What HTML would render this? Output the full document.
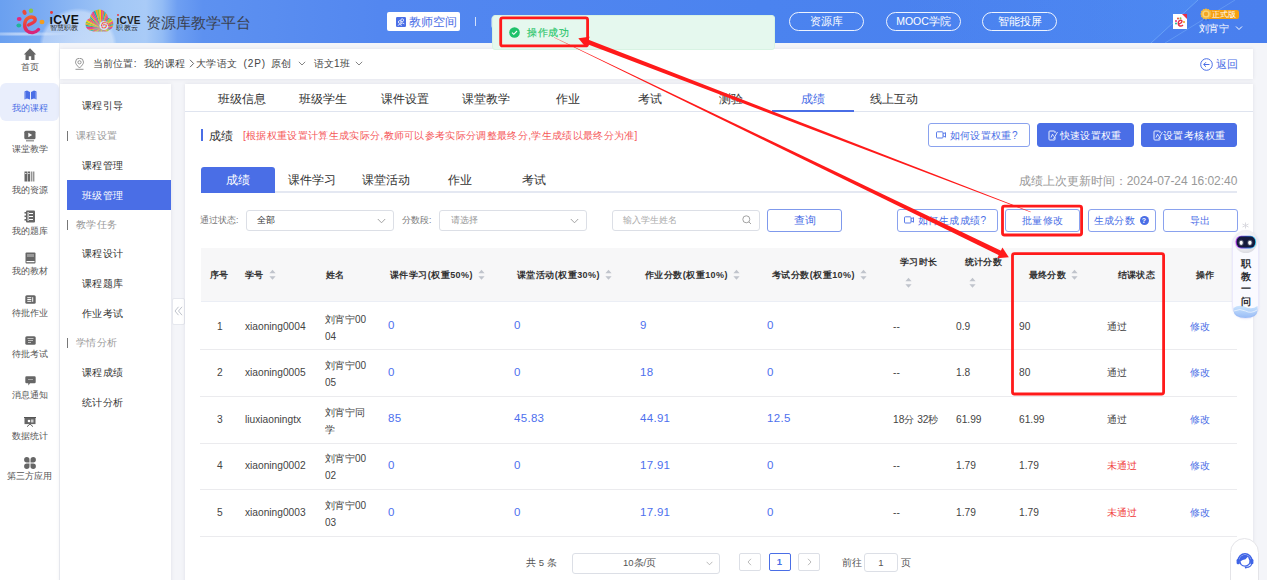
<!DOCTYPE html>
<html><head><meta charset="utf-8">
<style>
*{box-sizing:border-box;margin:0;padding:0}
html,body{width:1267px;height:580px;overflow:hidden}
body{position:relative;background:#f4f5f9;font-family:"Liberation Sans",sans-serif;color:#333;}
.a{position:absolute;white-space:nowrap}
#hdr{left:0;top:0;width:1267px;height:43px;overflow:hidden;
background:
radial-gradient(circle at 78px 47px,rgba(255,255,255,.45) 0,rgba(255,255,255,.38) 35px,rgba(255,255,255,0) 39px),
radial-gradient(ellipse 50px 2.5px at 20px 34px,rgba(255,255,255,.6),rgba(255,255,255,0) 100%),
linear-gradient(90deg,#6aa0f0 0%,#79aaf2 3%,#8db8f4 6%,#a2c7f6 9%,#a9cbf7 11.5%,#93bcf5 12.8%,#6e9ff2 14%,#5d91f0 16%,#5387f0 30%,#4b83ef 60%,#497fee 100%)}
#nav{left:0;top:43px;width:60px;height:537px;background:#fff;border-right:1px solid #eef0f4}
.ni{position:absolute;left:0;width:59px;text-align:center;font-size:8.7px;color:#555;line-height:10px}
.ni svg{display:block;margin:0 auto}
#crumb{left:60px;top:49px;width:1192.5px;height:30px;background:#fff;box-shadow:0 0 4px rgba(0,20,60,.09)}
#menu{left:60px;top:84px;width:111px;height:520px;background:#fff;box-shadow:0 0 4px rgba(0,20,60,.09)}
.mi{position:absolute;left:22px;font-size:10px;letter-spacing:.4px;color:#333;line-height:12px}
.mg{position:absolute;left:16px;font-size:10px;letter-spacing:.4px;color:#999;line-height:12px}
.mg:before{content:"";position:absolute;left:-9.5px;top:1px;width:1.3px;height:10px;background:#777}
#main{left:185px;top:83.5px;width:1067.5px;height:520px;background:#fff;box-shadow:0 0 4px rgba(0,20,60,.09)}
.pill{position:absolute;top:12px;height:19px;border:1px solid rgba(255,255,255,.9);border-radius:10px;color:#fff;font-size:10.5px;line-height:17px;text-align:center}
.tab{position:absolute;top:92.8px;width:81.6px;text-align:center;font-size:12px;line-height:13px;color:#333}
.stab{position:absolute;top:174px;width:74px;text-align:center;font-size:12px;line-height:13px;color:#333}
.btn{position:absolute;height:24px;border:1px solid #8aa2ee;border-radius:3px;background:#fff;color:#4a6ee6;font-size:10.5px;line-height:22px;text-align:center}
.bt{font-size:10px;letter-spacing:.4px;line-height:12px}
.bb{background:#4a6ee6;border-color:#4a6ee6;color:#fff}
.th{position:absolute;font-size:9px;letter-spacing:.45px;font-weight:bold;color:#333;line-height:11px}
.td{position:absolute;font-size:10.2px;color:#444;line-height:12px}
.bl{color:#4a6ee6}
.bn{font-size:11.5px;letter-spacing:.3px;color:#4d70ee}
.rd{color:#f03c3c}
.sort{display:inline-block;width:7px;height:11px;vertical-align:middle;margin-left:5px;position:relative;top:-0.5px}
.hl{position:absolute;left:200px;width:1037px;height:1px;background:#ebebee}
</style></head>
<body>
<!-- HEADER -->
<div id="hdr" class="a">
  <!-- flower logo -->
  <svg class="a" style="left:14px;top:8px" width="32" height="28" viewBox="0 0 32 28">
    <defs><linearGradient id="eg" x1="0" y1="0" x2="0.3" y2="1"><stop offset="0" stop-color="#f2652b"/><stop offset=".55" stop-color="#e8334a"/><stop offset="1" stop-color="#d8247a"/></linearGradient></defs>
    <ellipse cx="10.5" cy="4.3" rx="2" ry="2.6" fill="#ec4a3a" transform="rotate(-25 10.5 4.3)"/>
    <ellipse cx="17" cy="2.8" rx="2.2" ry="2.2" fill="#8dc641"/>
    <ellipse cx="5.2" cy="11" rx="2.4" ry="2" fill="#e3287c"/>
    <ellipse cx="4.8" cy="17.5" rx="2.4" ry="2" fill="#20b49b"/>
    <ellipse cx="28" cy="14" rx="2.5" ry="2.3" fill="#f49d1c"/>
    <path d="M14.5 17 C16.5 15.5 21 15 21.2 12 C21.3 9 17 8.2 13.8 10.2 C10 12.8 9.6 19.5 13 22.8 C16.3 25.8 21.5 25 24.5 21.5" fill="none" stroke="url(#eg)" stroke-width="3.4" stroke-linecap="round"/>
  </svg>
  <div class="a" style="left:49.5px;top:13.5px;font-size:12.2px;font-weight:bold;color:#111;line-height:12px;letter-spacing:.3px">&#305;CVE</div>
  <div class="a" style="left:50.3px;top:11.2px;width:2.8px;height:2.8px;border-radius:50%;background:#e8393a"></div>
  <div class="a" style="left:50px;top:24px;font-size:6.5px;color:#222;line-height:7px">智慧职教</div>
  <!-- cloud logo -->
  <svg class="a" style="left:85px;top:9px" width="30" height="24" viewBox="0 0 30 24">
    <defs><clipPath id="cl"><circle cx="7" cy="15.5" r="6.5"/><circle cx="14" cy="9.5" r="9"/><circle cx="22" cy="15" r="6.3"/><rect x="5" y="14" width="20" height="8.5" rx="4"/></clipPath></defs>
    <g clip-path="url(#cl)"><path d="M16 19 L46.0 19.0 L45.8 22.1 Z" fill="#ef3f7a"/><path d="M16 19 L45.8 22.1 L45.3 25.2 Z" fill="#1fb3a0"/><path d="M16 19 L45.3 25.2 L44.5 28.3 Z" fill="#f7a21b"/><path d="M16 19 L44.5 28.3 L43.4 31.2 Z" fill="#8cc63f"/><path d="M16 19 L43.4 31.2 L42.0 34.0 Z" fill="#f5d20a"/><path d="M16 19 L42.0 34.0 L40.3 36.6 Z" fill="#e84c8b"/><path d="M16 19 L40.3 36.6 L38.3 39.1 Z" fill="#f26b3a"/><path d="M16 19 L38.3 39.1 L36.1 41.3 Z" fill="#2bb6a6"/><path d="M16 19 L36.1 41.3 L33.6 43.3 Z" fill="#f39a1a"/><path d="M16 19 L33.6 43.3 L31.0 45.0 Z" fill="#d94ea0"/><path d="M16 19 L31.0 45.0 L28.2 46.4 Z" fill="#ef3f7a"/><path d="M16 19 L28.2 46.4 L25.3 47.5 Z" fill="#1fb3a0"/><path d="M16 19 L25.3 47.5 L22.2 48.3 Z" fill="#f7a21b"/><path d="M16 19 L22.2 48.3 L19.1 48.8 Z" fill="#8cc63f"/><path d="M16 19 L19.1 48.8 L16.0 49.0 Z" fill="#f5d20a"/><path d="M16 19 L16.0 49.0 L12.9 48.8 Z" fill="#e84c8b"/><path d="M16 19 L12.9 48.8 L9.8 48.3 Z" fill="#f26b3a"/><path d="M16 19 L9.8 48.3 L6.7 47.5 Z" fill="#2bb6a6"/><path d="M16 19 L6.7 47.5 L3.8 46.4 Z" fill="#f39a1a"/><path d="M16 19 L3.8 46.4 L1.0 45.0 Z" fill="#d94ea0"/><path d="M16 19 L1.0 45.0 L-1.6 43.3 Z" fill="#ef3f7a"/><path d="M16 19 L-1.6 43.3 L-4.1 41.3 Z" fill="#1fb3a0"/><path d="M16 19 L-4.1 41.3 L-6.3 39.1 Z" fill="#f7a21b"/><path d="M16 19 L-6.3 39.1 L-8.3 36.6 Z" fill="#8cc63f"/><path d="M16 19 L-8.3 36.6 L-10.0 34.0 Z" fill="#f5d20a"/><path d="M16 19 L-10.0 34.0 L-11.4 31.2 Z" fill="#e84c8b"/><path d="M16 19 L-11.4 31.2 L-12.5 28.3 Z" fill="#f26b3a"/><path d="M16 19 L-12.5 28.3 L-13.3 25.2 Z" fill="#2bb6a6"/><path d="M16 19 L-13.3 25.2 L-13.8 22.1 Z" fill="#f39a1a"/><path d="M16 19 L-13.8 22.1 L-14.0 19.0 Z" fill="#d94ea0"/><path d="M16 19 L-14.0 19.0 L-13.8 15.9 Z" fill="#ef3f7a"/><path d="M16 19 L-13.8 15.9 L-13.3 12.8 Z" fill="#1fb3a0"/><path d="M16 19 L-13.3 12.8 L-12.5 9.7 Z" fill="#f7a21b"/><path d="M16 19 L-12.5 9.7 L-11.4 6.8 Z" fill="#8cc63f"/><path d="M16 19 L-11.4 6.8 L-10.0 4.0 Z" fill="#f5d20a"/><path d="M16 19 L-10.0 4.0 L-8.3 1.4 Z" fill="#e84c8b"/><path d="M16 19 L-8.3 1.4 L-6.3 -1.1 Z" fill="#f26b3a"/><path d="M16 19 L-6.3 -1.1 L-4.1 -3.3 Z" fill="#2bb6a6"/><path d="M16 19 L-4.1 -3.3 L-1.6 -5.3 Z" fill="#f39a1a"/><path d="M16 19 L-1.6 -5.3 L1.0 -7.0 Z" fill="#d94ea0"/><path d="M16 19 L1.0 -7.0 L3.8 -8.4 Z" fill="#ef3f7a"/><path d="M16 19 L3.8 -8.4 L6.7 -9.5 Z" fill="#1fb3a0"/><path d="M16 19 L6.7 -9.5 L9.8 -10.3 Z" fill="#f7a21b"/><path d="M16 19 L9.8 -10.3 L12.9 -10.8 Z" fill="#8cc63f"/><path d="M16 19 L12.9 -10.8 L16.0 -11.0 Z" fill="#f5d20a"/><path d="M16 19 L16.0 -11.0 L19.1 -10.8 Z" fill="#e84c8b"/><path d="M16 19 L19.1 -10.8 L22.2 -10.3 Z" fill="#f26b3a"/><path d="M16 19 L22.2 -10.3 L25.3 -9.5 Z" fill="#2bb6a6"/><path d="M16 19 L25.3 -9.5 L28.2 -8.4 Z" fill="#f39a1a"/><path d="M16 19 L28.2 -8.4 L31.0 -7.0 Z" fill="#d94ea0"/><path d="M16 19 L31.0 -7.0 L33.6 -5.3 Z" fill="#ef3f7a"/><path d="M16 19 L33.6 -5.3 L36.1 -3.3 Z" fill="#1fb3a0"/><path d="M16 19 L36.1 -3.3 L38.3 -1.1 Z" fill="#f7a21b"/><path d="M16 19 L38.3 -1.1 L40.3 1.4 Z" fill="#8cc63f"/><path d="M16 19 L40.3 1.4 L42.0 4.0 Z" fill="#f5d20a"/><path d="M16 19 L42.0 4.0 L43.4 6.8 Z" fill="#e84c8b"/><path d="M16 19 L43.4 6.8 L44.5 9.7 Z" fill="#f26b3a"/><path d="M16 19 L44.5 9.7 L45.3 12.8 Z" fill="#2bb6a6"/><path d="M16 19 L45.3 12.8 L45.8 15.9 Z" fill="#f39a1a"/><path d="M16 19 L45.8 15.9 L46.0 19.0 Z" fill="#d94ea0"/></g>
    <circle cx="19" cy="16.5" r="4.6" fill="#d2e6fb"/>
    <path d="M18.6 16.6 C18.6 15.2 20.8 15 21.2 16.5 C21.6 18.3 19.4 19.4 17.8 18.6 C16 17.6 16.2 14.6 18.6 13.6 C21 12.8 23.6 14.4 23.6 17" fill="none" stroke="#ef3f7a" stroke-width="1.3" stroke-dasharray="1.5 1"/>
    <path d="M18.6 16.6 C18.6 15.2 20.8 15 21.2 16.5 C21.6 18.3 19.4 19.4 17.8 18.6 C16 17.6 16.2 14.6 18.6 13.6 C21 12.8 23.6 14.4 23.6 17" fill="none" stroke="#f7a21b" stroke-width="1.3" stroke-dasharray="1 1.5" stroke-dashoffset="1.2"/>
  </svg>
  <div class="a" style="left:116.5px;top:15.5px;font-size:10px;font-weight:bold;color:#1e1e1e;line-height:10px;letter-spacing:.2px">&#305;CVE</div><div class="a" style="left:117px;top:14px;width:2.4px;height:2.4px;border-radius:50%;background:#e8393a"></div>
  <div class="a" style="left:116.3px;top:24.3px;font-size:7px;color:#222;line-height:8px;letter-spacing:.4px">职教云</div>
  <div class="a" style="left:146px;top:14px;font-size:15px;color:#3a4150;line-height:17px">资源库教学平台</div>
  <svg class="a" style="left:0;top:0" width="1267" height="43" viewBox="0 0 1267 43">
    <defs><linearGradient id="hg" x1="0" x2="1"><stop offset="0" stop-color="#5aa0ff" stop-opacity="0"/><stop offset="1" stop-color="#5aa8ff" stop-opacity=".22"/></linearGradient></defs>
    <polygon points="900,0 1198,0 1151,43 900,43" fill="url(#hg)"/>
    <path d="M1151 43 L1198 0" stroke="#8cc4ff" stroke-opacity=".45" stroke-width="1"/>
    <path d="M1165 43 L1235 0" stroke="#8cc4ff" stroke-opacity=".35" stroke-width="1"/>
  </svg>
  <!-- teacher space button -->
  <div class="a" style="left:387px;top:12px;width:73px;height:19px;background:#fff;border-radius:2px"></div>
  <svg class="a" style="left:395.5px;top:16.5px" width="10" height="10" viewBox="0 0 10 10"><rect x="0" y="0" width="10" height="10" rx="1.2" fill="#4a6ee6"/><circle cx="6.2" cy="3.2" r="1.4" fill="none" stroke="#fff" stroke-width=".8"/><circle cx="3.8" cy="5" r="1.4" fill="none" stroke="#fff" stroke-width=".8"/><path d="M1.8 8.4 Q3.8 6.4 5.8 8.4 M4.5 7 Q6.3 5 8.3 6.8" fill="none" stroke="#fff" stroke-width=".8"/></svg>
  <div class="a" style="left:409px;top:14.8px;font-size:12px;color:#4a6ee6;line-height:14px">教师空间</div>
  <div class="a" style="left:475px;top:17px;width:1.2px;height:9px;background:rgba(255,255,255,.75)"></div><div class="a" style="left:491px;top:16.5px;width:4px;height:11px;border:1px solid rgba(255,255,255,.45);border-right:none;border-radius:2px 0 0 2px"></div>
  <!-- pills -->
  <div class="pill" style="left:789px;width:75px">资源库</div>
  <div class="pill" style="left:886px;width:75px">MOOC学院</div>
  <div class="pill" style="left:982px;width:75px">智能投屏</div>
  <!-- user -->
  <div class="a" style="left:1173px;top:14px;width:14px;height:15px;background:#fff"></div>
  <svg class="a" style="left:1174px;top:16px" width="12" height="12" viewBox="0 0 12 12">
    <circle cx="4" cy="2.5" r="1" fill="#e8493a"/><circle cx="6.5" cy="2.3" r="1" fill="#8cc63f"/>
    <circle cx="2" cy="5" r="1" fill="#e6287a"/><circle cx="2" cy="7.5" r="1" fill="#1fb59a"/><circle cx="10" cy="6" r="1" fill="#f39c1a"/>
    <path d="M5 8 C6 7.5 8 7 8 5.5 C8 4 6 4 5 5 C3.8 6.3 4 9 5.5 9.8 C6.7 10.3 8 10 9 9" fill="none" stroke="#e5304a" stroke-width="1.4"/>
  </svg>
  <svg class="a" style="left:1182px;top:14px" width="5" height="5" viewBox="0 0 5 5"><path d="M0 0 L5 0 L5 5 Z" fill="#e5304a"/></svg>
  <div class="a" style="left:1207px;top:10px;width:32px;height:9px;background:#f5a00f;border-radius:2px;color:#fff;font-size:8px;line-height:9px;padding-left:5px">正式版</div>
  <svg class="a" style="left:1199.5px;top:7.5px" width="12" height="14" viewBox="0 0 12 14"><path d="M4 10 L3 13.5 L5 12.5 L6 13.8 M8 10 L9 13.5 L7 12.5 L6 13.8" fill="#3f6fd8"/><polygon points="11.80,6.00 10.73,7.27 11.02,8.90 9.46,9.46 8.90,11.02 7.27,10.73 6.00,11.80 4.73,10.73 3.10,11.02 2.54,9.46 0.98,8.90 1.27,7.27 0.20,6.00 1.27,4.73 0.98,3.10 2.54,2.54 3.10,0.98 4.73,1.27 6.00,0.20 7.27,1.27 8.90,0.98 9.46,2.54 11.02,3.10 10.73,4.73" fill="#f6b93b"/><circle cx="6" cy="6" r="3.6" fill="#f9d57a"/><circle cx="6" cy="6" r="2.2" fill="#f4a623"/></svg>
  <div class="a" style="left:1199px;top:23px;font-size:10.4px;color:#fff;line-height:12px">刘宵宁</div>
  <svg class="a" style="left:1235px;top:25px" width="8" height="6" viewBox="0 0 8 6"><path d="M1 1.5 L4 4.5 L7 1.5" fill="none" stroke="#fff" stroke-width="1"/></svg>
</div>
<!-- LEFT NAV -->
<div id="nav" class="a">
  <div class="a" style="left:0;top:40px;width:59px;height:38px;background:#e9eefc;border-radius:6px"></div>
</div>
<!-- home -->
<svg class="a" style="left:23px;top:48px" width="14" height="13" viewBox="0 0 14 13"><path d="M7 0.3 L13.2 6.6 L11.5 6.6 L11.5 12 L8.2 12 L8.2 8.3 L5.8 8.3 L5.8 12 L2.5 12 L2.5 6.6 L0.8 6.6 Z" fill="#666"/></svg>
<div class="ni" style="top:62px">首页</div>
<!-- book -->
<svg class="a" style="left:23.5px;top:90px" width="13" height="10" viewBox="0 0 13 10"><path d="M0.5 1.5 L3 0.5 L6 2 L6 9.5 L3 8.5 L0.5 9.5 Z M12.5 1.5 L10 0.5 L7 2 L7 9.5 L10 8.5 L12.5 9.5 Z" fill="#4a6ee6"/><path d="M1.5 2 L1.5 9 M11.5 2 L11.5 9" stroke="#8aa2ee" stroke-width=".6"/></svg>
<div class="ni" style="top:103px;color:#4a6ee6">我的课程</div>
<!-- play -->
<svg class="a" style="left:24px;top:130px" width="12" height="12" viewBox="0 0 12 12"><rect x="0.3" y="0.8" width="11.2" height="8.4" rx="1.5" fill="#666"/><path d="M4.3 2.8 L8.2 5 L4.3 7.2 Z" fill="#fff"/><rect x="2" y="10.2" width="8" height="1.2" fill="#888"/></svg>
<div class="ni" style="top:144px">课堂教学</div>
<!-- resources -->
<svg class="a" style="left:24px;top:171px" width="12" height="11" viewBox="0 0 12 11"><rect x="0.5" y="0.5" width="2.6" height="10" fill="#666"/><rect x="3.6" y="0.5" width="2.6" height="10" fill="#666"/><rect x="7.3" y="0.5" width="1" height="10" fill="#666"/><rect x="9.3" y="0.5" width="1" height="10" fill="#666"/><rect x="1.2" y="2" width="1.2" height="1" fill="#fff"/><rect x="4.3" y="2" width="1.2" height="1" fill="#fff"/></svg>
<div class="ni" style="top:185px">我的资源</div>
<!-- tiku -->
<svg class="a" style="left:24px;top:210px" width="12" height="13" viewBox="0 0 12 13"><rect x="2" y="0.5" width="9" height="12" rx="1" fill="#666"/><rect x="0.5" y="2" width="3" height="1.6" fill="#666"/><rect x="0.5" y="5.5" width="3" height="1.6" fill="#666"/><rect x="0.5" y="9" width="3" height="1.6" fill="#666"/><rect x="5" y="3" width="4" height="1" fill="#fff"/><rect x="5" y="6" width="4" height="1" fill="#fff"/><rect x="5" y="9" width="4" height="1" fill="#fff"/><rect x="3.6" y="2" width="1" height="9" fill="#fff"/></svg>
<div class="ni" style="top:226px">我的题库</div>
<!-- jiaocai -->
<svg class="a" style="left:24.5px;top:252px" width="11" height="12" viewBox="0 0 11 12"><rect x="0.5" y="0.5" width="10" height="11" rx="1" fill="#666"/><rect x="2" y="2" width="7" height="3" fill="#999"/><rect x="1.5" y="9" width="8" height="1.2" fill="#fff"/></svg>
<div class="ni" style="top:266px">我的教材</div>
<!-- pigai zuoye -->
<svg class="a" style="left:24.5px;top:295px" width="11" height="9" viewBox="0 0 11 9"><rect x="0.3" y="0.3" width="10.4" height="8.4" rx="1.5" fill="#666"/><rect x="2.3" y="2.2" width="4" height="1" fill="#fff"/><rect x="2.3" y="4" width="4" height="1" fill="#fff"/><rect x="2.3" y="5.8" width="4" height="1" fill="#fff"/><rect x="7.2" y="2.2" width="1" height="4.6" fill="#fff"/></svg>
<div class="ni" style="top:308px">待批作业</div>
<!-- pigai kaoshi -->
<svg class="a" style="left:24.5px;top:336px" width="11" height="9" viewBox="0 0 11 9"><rect x="0.3" y="0.3" width="10.4" height="8.4" rx="1.5" fill="#666"/><path d="M2.5 2.5 L8.5 2.5 M3 4.5 L8 4.5 M3 6.5 L6 6.5" stroke="#ccc" stroke-width=".9"/></svg>
<div class="ni" style="top:349px">待批考试</div>
<!-- message -->
<svg class="a" style="left:24.5px;top:376px" width="11" height="10" viewBox="0 0 11 10"><path d="M1.5 0.3 L9.5 0.3 Q10.7 0.3 10.7 1.5 L10.7 6 Q10.7 7.2 9.5 7.2 L5 7.2 L3.5 9.5 L3.2 7.2 L1.5 7.2 Q0.3 7.2 0.3 6 L0.3 1.5 Q0.3 0.3 1.5 0.3 Z" fill="#666"/><rect x="3" y="3" width="5" height="1" fill="#aaa"/></svg>
<div class="ni" style="top:390px">消息通知</div>
<!-- data -->
<svg class="a" style="left:24px;top:417px" width="12" height="10" viewBox="0 0 12 10"><rect x="0.5" y="0.3" width="11" height="6.8" fill="#666"/><rect x="0" y="0" width="12" height="1" fill="#555"/><path d="M6 7 L3 9.7 M6 7 L9 9.7" stroke="#666" stroke-width="1"/><circle cx="5" cy="4" r="1.3" fill="#fff"/><rect x="7" y="2.5" width="2.5" height="3" fill="#ccc"/></svg>
<div class="ni" style="top:431px">数据统计</div>
<!-- apps -->
<svg class="a" style="left:24px;top:457px" width="12" height="12" viewBox="0 0 12 12"><path d="M5.5 5.5 L5.5 2.8 A2.7 2.7 0 1 0 2.8 5.5 Z M6.5 5.5 L6.5 2.8 A2.7 2.7 0 1 1 9.2 5.5 Z M5.5 6.5 L5.5 9.2 A2.7 2.7 0 1 1 2.8 6.5 Z M6.5 6.5 L6.5 9.2 A2.7 2.7 0 1 0 9.2 6.5 Z" fill="#666"/></svg>
<div class="ni" style="top:471px">第三方应用</div>

<!-- BREADCRUMB -->
<div id="crumb" class="a"></div>
<svg class="a" style="left:74px;top:58px" width="11" height="12" viewBox="0 0 11 12"><path d="M5.5 10 C3 7.5 1.5 5.8 1.5 4.2 A4 4 0 0 1 9.5 4.2 C9.5 5.8 8 7.5 5.5 10 Z" fill="none" stroke="#888" stroke-width=".9"/><circle cx="5.5" cy="4.3" r="1.6" fill="none" stroke="#888" stroke-width=".9"/><path d="M1.5 11.3 L9.5 11.3" stroke="#888" stroke-width=".9"/></svg>
<div class="a" style="left:92.5px;top:58px;font-size:10px;line-height:12px;color:#444;letter-spacing:.3px">当前位置:</div><div class="a" style="left:144px;top:58px;font-size:10px;line-height:12px;color:#444;letter-spacing:.35px">我的课程</div>
<svg class="a" style="left:189px;top:59px" width="6" height="9" viewBox="0 0 6 9"><path d="M1 0.8 L4.6 4.5 L1 8.2" fill="none" stroke="#555" stroke-width=".9"/></svg>
<div class="a" style="left:196px;top:58px;font-size:10px;line-height:12px;color:#444;letter-spacing:.35px">大学语文</div><div class="a" style="left:243.5px;top:58px;font-size:10px;line-height:12px;color:#444;letter-spacing:.9px">(2P)</div><div class="a" style="left:271px;top:58px;font-size:10px;line-height:12px;color:#444;letter-spacing:.3px">原创</div>
<svg class="a" style="left:298px;top:61px" width="8" height="5" viewBox="0 0 8 5"><path d="M0.8 0.8 L4 4 L7.2 0.8" fill="none" stroke="#777" stroke-width=".9"/></svg>
<div class="a" style="left:313.5px;top:58px;font-size:10px;line-height:12px;color:#444;letter-spacing:.3px">语文1班</div>
<svg class="a" style="left:355px;top:61px" width="8" height="5" viewBox="0 0 8 5"><path d="M0.8 0.8 L4 4 L7.2 0.8" fill="none" stroke="#777" stroke-width=".9"/></svg>
<svg class="a" style="left:1200px;top:57.5px" width="13" height="13" viewBox="0 0 13 13"><circle cx="6.5" cy="6.5" r="5.8" fill="none" stroke="#4a6ee6" stroke-width="1"/><path d="M9.5 6.5 L3.8 6.5 M6 4.2 L3.7 6.5 L6 8.8" fill="none" stroke="#4a6ee6" stroke-width="1"/></svg>
<div class="a" style="left:1216px;top:58px;font-size:10.5px;line-height:12px;color:#4a6ee6">返回</div>
<!-- COURSE MENU -->
<div id="menu" class="a"></div>
<div class="a" style="left:66.5px;top:180px;width:104.5px;height:30px;background:#4a6ee6"></div>
<div class="mi a" style="left:82px;top:100px">课程引导</div>
<div class="mg a" style="left:76px;top:130px">课程设置</div>
<div class="mi a" style="left:82px;top:160px">课程管理</div>
<div class="mi a" style="left:82px;top:189.5px;color:#fff">班级管理</div>
<div class="mg a" style="left:76px;top:218.5px">教学任务</div>
<div class="mi a" style="left:82px;top:248px">课程设计</div>
<div class="mi a" style="left:82px;top:278px">课程题库</div>
<div class="mi a" style="left:82px;top:307.5px">作业考试</div>
<div class="mg a" style="left:76px;top:337px">学情分析</div>
<div class="mi a" style="left:82px;top:367px">课程成绩</div>
<div class="mi a" style="left:82px;top:397px">统计分析</div>
<div class="a" style="left:171.5px;top:298px;width:13px;height:27px;background:#fff;border:1px solid #e6e8ee;border-radius:2px"></div>
<svg class="a" style="left:173.5px;top:306px" width="9" height="10" viewBox="0 0 9 10"><path d="M4.5 0.8 L1 5 L4.5 9.2 M8 0.8 L4.5 5 L8 9.2" fill="none" stroke="#b8bcc6" stroke-width=".9"/></svg>

<!-- MAIN -->
<div id="main" class="a"></div>
<div class="a" style="left:185px;top:110.5px;width:1067.5px;height:1px;background:#dfe4ef"></div>
<div class="tab" style="left:200.8px">班级信息</div>
<div class="tab" style="left:282.4px">班级学生</div>
<div class="tab" style="left:364px">课件设置</div>
<div class="tab" style="left:445.6px">课堂教学</div>
<div class="tab" style="left:527.2px">作业</div>
<div class="tab" style="left:608.8px">考试</div>
<div class="tab" style="left:690.4px">测验</div>
<div class="tab" style="left:772px;color:#4a6ee6">成绩</div>
<div class="tab" style="left:853.6px">线上互动</div>
<div class="a" style="left:772px;top:110.3px;width:82px;height:2px;background:#4a6ee6"></div>

<div class="a" style="left:200.5px;top:129px;width:2px;height:11.5px;background:#4a6ee6"></div>
<div class="a" style="left:209px;top:129.5px;font-size:12px;line-height:13px;color:#333">成绩</div>
<div class="a" style="left:243px;top:130px;font-size:10px;letter-spacing:0.33px;line-height:12px;color:#f5585a">[根据权重设置计算生成实际分,教师可以参考实际分调整最终分,学生成绩以最终分为准]</div>

<div class="btn" style="left:928px;top:123px;width:102px"></div><div class="a bt" style="left:949.5px;top:129.5px;color:#4a6ee6">如何设置权重?</div>
<svg class="a" style="left:936px;top:131px" width="10" height="8" viewBox="0 0 10 8"><rect x="0.5" y="0.8" width="6.5" height="6.2" rx="0.8" fill="none" stroke="#4a6ee6" stroke-width=".9"/><path d="M7 3 L9.5 1.6 L9.5 6.2 L7 4.8" fill="none" stroke="#4a6ee6" stroke-width=".9"/></svg>
<div class="btn bb" style="left:1036.5px;top:123px;width:97px"></div><div class="a bt" style="left:1059.5px;top:129.5px;color:#fff">快速设置权重</div>
<div class="btn bb" style="left:1141px;top:123px;width:96px"></div><div class="a bt" style="left:1163px;top:129.5px;color:#fff">设置考核权重</div>
<svg class="a" style="left:1047.5px;top:130px" width="11" height="11" viewBox="0 0 11 11"><path d="M6.5 1 L1.8 1 Q1 1 1 1.8 L1 9.2 Q1 10 1.8 10 L6.2 10 Q7 10 7 9.2 L7 7" fill="none" stroke="#fff" stroke-width=".9"/><path d="M7 1 L7 3" stroke="#fff" stroke-width=".9"/><path d="M3 7.5 L4.5 4.2 L5.8 6.5 M5.5 9 L9.5 2" fill="none" stroke="#fff" stroke-width=".8"/></svg>
<svg class="a" style="left:1152.5px;top:130px" width="11" height="11" viewBox="0 0 11 11"><path d="M6.5 1 L1.8 1 Q1 1 1 1.8 L1 9.2 Q1 10 1.8 10 L6.2 10 Q7 10 7 9.2 L7 7" fill="none" stroke="#fff" stroke-width=".9"/><path d="M7 1 L7 3" stroke="#fff" stroke-width=".9"/><path d="M3 7.5 L4.5 4.2 L5.8 6.5 M5.5 9 L9.5 2" fill="none" stroke="#fff" stroke-width=".8"/></svg>

<!-- subtabs -->
<div class="a" style="left:200.8px;top:191px;width:1036.5px;height:2px;background:#e4e8f2"></div>
<div class="a" style="left:200.8px;top:167px;width:74px;height:26px;background:#4a6ee6;border-radius:3px 3px 0 0"></div>
<div class="stab" style="left:200.8px;color:#fff">成绩</div>
<div class="stab" style="left:274.8px">课件学习</div>
<div class="stab" style="left:348.8px">课堂活动</div>
<div class="stab" style="left:422.8px">作业</div>
<div class="stab" style="left:496.8px">考试</div>
<div class="a" style="left:1019px;top:174.5px;font-size:12px;line-height:13px;color:#999;letter-spacing:-.04px">成绩上次更新时间：2024-07-24 16:02:40</div>
<!-- filters -->
<div class="a" style="left:200px;top:215px;font-size:8.5px;line-height:11px;color:#777">通过状态:</div>
<div class="a" style="left:245.5px;top:210px;width:148px;height:20.5px;border:1px solid #dcdfe6;border-radius:3px;background:#fff"></div>
<div class="a" style="left:257px;top:215px;font-size:9px;line-height:11px;color:#333">全部</div>
<svg class="a" style="left:377px;top:218px" width="9" height="6" viewBox="0 0 9 6"><path d="M0.8 1 L4.5 4.8 L8.2 1" fill="none" stroke="#999" stroke-width=".9"/></svg>
<div class="a" style="left:402px;top:215px;font-size:8.5px;line-height:11px;color:#777">分数段:</div>
<div class="a" style="left:439px;top:210px;width:148px;height:20.5px;border:1px solid #dcdfe6;border-radius:3px;background:#fff"></div>
<div class="a" style="left:450.5px;top:215px;font-size:9px;line-height:11px;color:#999">请选择</div>
<svg class="a" style="left:569.5px;top:218px" width="9" height="6" viewBox="0 0 9 6"><path d="M0.8 1 L4.5 4.8 L8.2 1" fill="none" stroke="#999" stroke-width=".9"/></svg>
<div class="a" style="left:612px;top:210px;width:148px;height:20.5px;border:1px solid #dcdfe6;border-radius:3px;background:#fff"></div>
<div class="a" style="left:623px;top:215px;font-size:9px;line-height:11px;color:#aaa">输入学生姓名</div>
<svg class="a" style="left:742px;top:214.5px" width="10" height="10" viewBox="0 0 10 10"><circle cx="4.3" cy="4.3" r="3.5" fill="none" stroke="#999" stroke-width=".9"/><path d="M6.8 6.8 L9 9" stroke="#999" stroke-width=".9"/></svg>
<div class="btn" style="left:767px;top:208.5px;width:75px;height:23.5px;line-height:21.5px;border-color:#7f99ec">查询</div>

<div class="btn" style="left:897px;top:208.5px;width:101px;height:23px"></div><div class="a bt" style="left:918px;top:215px;color:#4a6ee6">如何生成成绩?</div>
<svg class="a" style="left:904px;top:216px" width="10" height="8" viewBox="0 0 10 8"><rect x="0.5" y="0.8" width="6.5" height="6.2" rx="0.8" fill="none" stroke="#4a6ee6" stroke-width=".9"/><path d="M7 3 L9.5 1.6 L9.5 6.2 L7 4.8" fill="none" stroke="#4a6ee6" stroke-width=".9"/></svg>
<div class="btn" style="left:1005px;top:208.5px;width:75px;height:23px"></div><div class="a bt" style="left:1022px;top:215px;color:#4a6ee6">批量修改</div>
<div class="btn" style="left:1087.5px;top:208.5px;width:68px;height:23px"></div><div class="a bt" style="left:1093.5px;top:215px;color:#4a6ee6">生成分数</div>
<div class="a" style="left:1139.5px;top:215.5px;width:9px;height:9px;border-radius:50%;background:#4a6ee6;color:#fff;font-size:7px;line-height:9px;text-align:center;font-weight:bold">?</div>
<div class="btn" style="left:1163px;top:208.5px;width:74.5px;height:23px"></div><div class="a bt" style="left:1190px;top:215px;color:#4a6ee6">导出</div>

<!-- TABLE -->
<div class="a" style="left:200.5px;top:248px;width:1036.5px;height:54px;background:#f7f7f8;border-bottom:1px solid #ebeef5"></div>
<div class="th" style="left:209.5px;top:269.5px">序号</div>
<div class="th" style="left:245px;top:269.5px">学号<svg class="sort" viewBox="0 0 7 11"><path d="M3.5 0.8 L6.6 4.2 L0.4 4.2 Z M3.5 10.8 L6.6 7.2 L0.4 7.2 Z" fill="#c0c4cc"/></svg></div>
<div class="th" style="left:325.5px;top:269.5px">姓名</div>
<div class="th" style="left:390px;top:269.5px">课件学习(权重50%)<svg class="sort" viewBox="0 0 7 11"><path d="M3.5 0.8 L6.6 4.2 L0.4 4.2 Z M3.5 10.8 L6.6 7.2 L0.4 7.2 Z" fill="#c0c4cc"/></svg></div>
<div class="th" style="left:517px;top:269.5px">课堂活动(权重30%)<svg class="sort" viewBox="0 0 7 11"><path d="M3.5 0.8 L6.6 4.2 L0.4 4.2 Z M3.5 10.8 L6.6 7.2 L0.4 7.2 Z" fill="#c0c4cc"/></svg></div>
<div class="th" style="left:645px;top:269.5px">作业分数(权重10%)<svg class="sort" viewBox="0 0 7 11"><path d="M3.5 0.8 L6.6 4.2 L0.4 4.2 Z M3.5 10.8 L6.6 7.2 L0.4 7.2 Z" fill="#c0c4cc"/></svg></div>
<div class="th" style="left:772px;top:269.5px">考试分数(权重10%)<svg class="sort" viewBox="0 0 7 11"><path d="M3.5 0.8 L6.6 4.2 L0.4 4.2 Z M3.5 10.8 L6.6 7.2 L0.4 7.2 Z" fill="#c0c4cc"/></svg></div>
<div class="th" style="left:900px;top:256.5px">学习时长</div>
<svg class="a" style="left:905px;top:277px" width="7" height="11" viewBox="0 0 7 11"><path d="M3.5 0.8 L6.6 4.2 L0.4 4.2 Z M3.5 10.8 L6.6 7.2 L0.4 7.2 Z" fill="#c0c4cc"/></svg>
<div class="th" style="left:964.5px;top:256.5px">统计分数</div>
<svg class="a" style="left:969px;top:277px" width="7" height="11" viewBox="0 0 7 11"><path d="M3.5 0.8 L6.6 4.2 L0.4 4.2 Z M3.5 10.8 L6.6 7.2 L0.4 7.2 Z" fill="#c0c4cc"/></svg>
<div class="th" style="left:1028.5px;top:269.5px">最终分数<svg class="sort" viewBox="0 0 7 11"><path d="M3.5 0.8 L6.6 4.2 L0.4 4.2 Z M3.5 10.8 L6.6 7.2 L0.4 7.2 Z" fill="#c0c4cc"/></svg></div>
<div class="th" style="left:1117.5px;top:269.5px">结课状态</div>
<div class="th" style="left:1196px;top:269.5px">操作</div>

<!-- rows -->
<div class="td" style="left:217px;top:320.5px">1</div>
<div class="td" style="left:245px;top:320.5px">xiaoning0004</div>
<div class="td" style="left:325px;top:310.5px;line-height:17px;font-size:10px">刘宵宁00<br>04</div>
<div class="td bl bn" style="left:388px;top:319.0px">0</div>
<div class="td bl bn" style="left:514px;top:319.0px">0</div>
<div class="td bl bn" style="left:640px;top:319.0px">9</div>
<div class="td bl bn" style="left:767px;top:319.0px">0</div>
<div class="td" style="left:893px;top:320.5px">--</div>
<div class="td" style="left:956px;top:320.5px">0.9</div>
<div class="td" style="left:1019px;top:320.5px">90</div>
<div class="td" style="left:1107px;top:320.5px">通过</div>
<div class="td bl" style="left:1189.5px;top:320.5px">修改</div>
<div class="hl" style="top:349px"></div>
<div class="td" style="left:217px;top:367.0px">2</div>
<div class="td" style="left:245px;top:367.0px">xiaoning0005</div>
<div class="td" style="left:325px;top:357.0px;line-height:17px;font-size:10px">刘宵宁00<br>05</div>
<div class="td bl bn" style="left:388px;top:365.5px">0</div>
<div class="td bl bn" style="left:514px;top:365.5px">0</div>
<div class="td bl bn" style="left:640px;top:365.5px">18</div>
<div class="td bl bn" style="left:767px;top:365.5px">0</div>
<div class="td" style="left:893px;top:367.0px">--</div>
<div class="td" style="left:956px;top:367.0px">1.8</div>
<div class="td" style="left:1019px;top:367.0px">80</div>
<div class="td" style="left:1107px;top:367.0px">通过</div>
<div class="td bl" style="left:1189.5px;top:367.0px">修改</div>
<div class="hl" style="top:395.5px"></div>
<div class="td" style="left:217px;top:413.5px">3</div>
<div class="td" style="left:245px;top:413.5px">liuxiaoningtx</div>
<div class="td" style="left:325px;top:403.5px;line-height:17px;font-size:10px">刘宵宁同<br>学</div>
<div class="td bl bn" style="left:388px;top:412.0px">85</div>
<div class="td bl bn" style="left:514px;top:412.0px">45.83</div>
<div class="td bl bn" style="left:640px;top:412.0px">44.91</div>
<div class="td bl bn" style="left:767px;top:412.0px">12.5</div>
<div class="td" style="left:893px;top:413.5px">18分 32秒</div>
<div class="td" style="left:956px;top:413.5px">61.99</div>
<div class="td" style="left:1019px;top:413.5px">61.99</div>
<div class="td" style="left:1107px;top:413.5px">通过</div>
<div class="td bl" style="left:1189.5px;top:413.5px">修改</div>
<div class="hl" style="top:442.5px"></div>
<div class="td" style="left:217px;top:460.0px">4</div>
<div class="td" style="left:245px;top:460.0px">xiaoning0002</div>
<div class="td" style="left:325px;top:450.0px;line-height:17px;font-size:10px">刘宵宁00<br>02</div>
<div class="td bl bn" style="left:388px;top:458.5px">0</div>
<div class="td bl bn" style="left:514px;top:458.5px">0</div>
<div class="td bl bn" style="left:640px;top:458.5px">17.91</div>
<div class="td bl bn" style="left:767px;top:458.5px">0</div>
<div class="td" style="left:893px;top:460.0px">--</div>
<div class="td" style="left:956px;top:460.0px">1.79</div>
<div class="td" style="left:1019px;top:460.0px">1.79</div>
<div class="td rd" style="left:1107px;top:460.0px">未通过</div>
<div class="td bl" style="left:1189.5px;top:460.0px">修改</div>
<div class="hl" style="top:489px"></div>
<div class="td" style="left:217px;top:507.0px">5</div>
<div class="td" style="left:245px;top:507.0px">xiaoning0003</div>
<div class="td" style="left:325px;top:497.0px;line-height:17px;font-size:10px">刘宵宁00<br>03</div>
<div class="td bl bn" style="left:388px;top:505.5px">0</div>
<div class="td bl bn" style="left:514px;top:505.5px">0</div>
<div class="td bl bn" style="left:640px;top:505.5px">17.91</div>
<div class="td bl bn" style="left:767px;top:505.5px">0</div>
<div class="td" style="left:893px;top:507.0px">--</div>
<div class="td" style="left:956px;top:507.0px">1.79</div>
<div class="td" style="left:1019px;top:507.0px">1.79</div>
<div class="td rd" style="left:1107px;top:507.0px">未通过</div>
<div class="td bl" style="left:1189.5px;top:507.0px">修改</div>
<div class="hl" style="top:536px"></div>
<!-- pagination -->
<div class="a" style="left:526px;top:556.5px;font-size:9.5px;line-height:11px;color:#555">共 5 条</div>
<div class="a" style="left:571.5px;top:552.5px;width:148px;height:21px;border:1px solid #dcdfe6;border-radius:3px"></div>
<div class="a" style="left:623px;top:557px;font-size:9.5px;line-height:11px;color:#555">10条/页</div>
<svg class="a" style="left:706px;top:561px" width="7" height="5" viewBox="0 0 7 5"><path d="M0.6 0.8 L3.5 3.8 L6.4 0.8" fill="none" stroke="#aaa" stroke-width=".8"/></svg>
<div class="a" style="left:738.5px;top:552.5px;width:22px;height:18px;border:1px solid #dcdfe6;border-radius:2px"></div>
<svg class="a" style="left:747px;top:558px" width="5" height="8" viewBox="0 0 5 8"><path d="M4 0.8 L1 4 L4 7.2" fill="none" stroke="#aaa" stroke-width=".8"/></svg>
<div class="a" style="left:768.5px;top:552.5px;width:22px;height:18px;border:1px solid #4a6ee6;border-radius:2px;color:#4a6ee6;font-size:9.5px;font-weight:bold;text-align:center;line-height:16px">1</div>
<div class="a" style="left:798px;top:552.5px;width:22px;height:18px;border:1px solid #dcdfe6;border-radius:2px"></div>
<svg class="a" style="left:807px;top:558px" width="5" height="8" viewBox="0 0 5 8"><path d="M1 0.8 L4 4 L1 7.2" fill="none" stroke="#aaa" stroke-width=".8"/></svg>
<div class="a" style="left:842px;top:556.5px;font-size:9.5px;line-height:11px;color:#555">前往</div>
<div class="a" style="left:864px;top:552.5px;width:34px;height:19px;border:1px solid #dcdfe6;border-radius:3px;font-size:9.5px;text-align:center;line-height:17px;color:#555">1</div>
<div class="a" style="left:901px;top:556.5px;font-size:9.5px;line-height:11px;color:#555">页</div>

<!-- robot widget -->
<div class="a" style="left:1232px;top:230.5px;width:26.5px;height:88px;border-radius:13.5px;background:#fafaff;border:1px solid #ebe9fb;box-shadow:0 0 2px rgba(150,150,230,.25)"></div>
<svg class="a" style="left:1241px;top:222px" width="9" height="7" viewBox="0 0 9 7"><path d="M4.5 0.5 L4.5 6.5 M1.5 2 L7.5 5 M7.5 2 L1.5 5" stroke="#d6d6dc" stroke-width=".9"/></svg>
<svg class="a" style="left:1233px;top:230px" width="26" height="24" viewBox="0 0 26 24">
  <defs><radialGradient id="hd" cx="45%" cy="35%" r="65%"><stop offset="0" stop-color="#fbfbfd"/><stop offset=".7" stop-color="#ececf0"/><stop offset="1" stop-color="#dcdce2"/></radialGradient>
  <linearGradient id="rim" x1="0" x2="1"><stop offset="0" stop-color="#c23cf0"/><stop offset=".5" stop-color="#3a4fd8"/><stop offset="1" stop-color="#30d0f0"/></linearGradient></defs>
  <circle cx="12.8" cy="11.5" r="11.5" fill="url(#hd)"/>
  <rect x="2.6" y="5.8" width="20.4" height="12.6" rx="5.5" fill="url(#rim)"/>
  <rect x="3.6" y="6.6" width="18.6" height="11" rx="4.8" fill="#141a3c"/>
  <ellipse cx="8.2" cy="12.8" rx="1.6" ry="2.1" fill="#fff"/>
  <ellipse cx="16.9" cy="12.8" rx="1.7" ry="2.1" fill="#fff"/>
  <ellipse cx="8.2" cy="12.8" rx="2.6" ry="3" fill="#fff" opacity=".25"/>
  <ellipse cx="16.9" cy="12.8" rx="2.6" ry="3" fill="#fff" opacity=".25"/>
</svg>
<div class="a" style="left:1240.8px;top:258.3px;width:11px;font-size:10px;line-height:12.6px;color:#2a2a30;font-weight:bold;white-space:normal;text-align:center">职<br>教<br>一<br>问</div>
<svg class="a" style="left:1233px;top:302px" width="25" height="17" viewBox="0 0 25 17">
  <defs><linearGradient id="wv" x1="0" y1="0" x2="0" y2="1"><stop offset="0" stop-color="#a9d4fb" stop-opacity=".6"/><stop offset="1" stop-color="#6d9ff2" stop-opacity=".7"/></linearGradient></defs>
  <path d="M0.5 6 Q6 2 12.5 5 Q19 8 24.5 4 L24.5 9 Q24 16 12.5 16 Q1 16 0.5 9 Z" fill="url(#wv)"/>
  <path d="M1 9 Q7 6 12.5 9 Q18 12 24 8" fill="none" stroke="#fff" stroke-opacity=".6" stroke-width="1"/>
</svg>
<!-- headset widget -->
<div class="a" style="left:1230px;top:538px;width:29px;height:60px;border-radius:15px;background:#fff;border:1px solid #e4e4e8"></div>
<svg class="a" style="left:1236px;top:551px" width="18" height="18" viewBox="0 0 18 18">
  <path d="M2.2 9.5 A6.8 6.8 0 0 1 15.8 9.5" fill="none" stroke="#3f64e6" stroke-width="1.5"/>
  <rect x="0.6" y="8" width="3.2" height="5.2" rx="1.3" fill="#3f64e6"/>
  <rect x="14.2" y="8" width="3.2" height="5.2" rx="1.3" fill="#3f64e6"/>
  <circle cx="9" cy="9.8" r="6" fill="#3f64e6"/>
  <path d="M4.6 10.2 Q6.5 8.8 9.5 8.2 Q11 6.8 12 5.8 Q12.6 8 13.4 9.6 Q13.6 14.2 9 14.6 Q4.8 14.4 4.6 10.2 Z" fill="#fff"/>
  <path d="M15.6 12.6 Q15.2 16.2 10.2 16.4" fill="none" stroke="#3f64e6" stroke-width="1.1"/>
  <circle cx="9.8" cy="16.4" r="1" fill="#3f64e6"/>
</svg>
<!-- TOAST -->
<div class="a" style="left:492px;top:15px;width:283px;height:35px;background:#e5f8ee;border:1px solid #d8f3e3;border-radius:3px"></div>
<svg class="a" style="left:508.5px;top:27px" width="11" height="11" viewBox="0 0 11 11"><circle cx="5.5" cy="5.5" r="5.3" fill="#1ec26a"/><path d="M3 5.6 L4.8 7.3 L8 4" fill="none" stroke="#fff" stroke-width="1.1"/></svg>
<div class="a" style="left:527px;top:26.5px;font-size:10px;letter-spacing:.5px;line-height:12px;color:#2ec66c;-webkit-text-stroke:.15px #2ec66c">操作成功</div>
<!-- ANNOTATIONS -->
<svg class="a" style="left:0;top:0" width="1267" height="580" viewBox="0 0 1267 580">
<g fill="none" stroke="#ff1a1a" stroke-width="2.8">
<rect x="500.7" y="17.8" width="86.9" height="28.1" rx="2"/>
<rect x="1002.5" y="206.2" width="79.1" height="28.8" rx="2"/>
<rect x="1012.5" y="253.6" width="151.1" height="140.4" rx="2"/>
</g>
<g fill="#ff1a1a"><polygon points="1030.77,211.81 586.59,39.02 584.94,43.31 1030.63,212.19"/><polygon points="578.30,38.30 589.64,36.66 585.63,47.11"/><polygon points="553.93,37.54 1000.51,255.97 1002.68,251.47 554.07,37.26"/><polygon points="1008.80,257.20 997.19,258.25 1002.41,247.45"/></g>
</svg>
</body></html>
